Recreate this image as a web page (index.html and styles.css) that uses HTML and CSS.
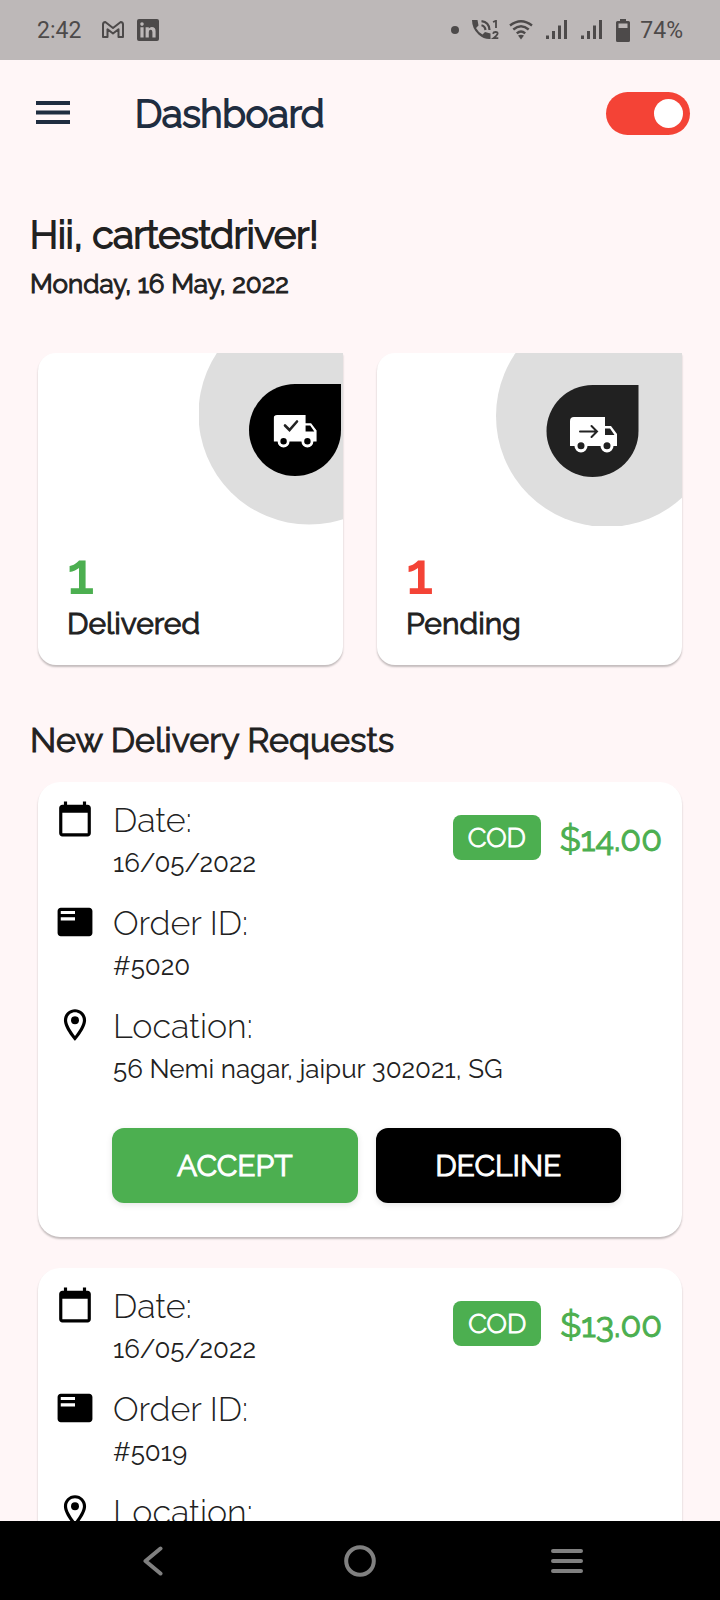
FILE: index.html
```html
<!DOCTYPE html>
<html lang="en">
<head>
<meta charset="utf-8">
<meta name="viewport" content="width=device-width, initial-scale=1">
<title>Dashboard</title>
<link rel="stylesheet" href="styles.css">
</head>
<body class="screen">
<svg class="defs" aria-hidden="true">
  <symbol id="calendar" viewBox="0 0 24 24"><path d="M20 3h-1V1h-2v2H7V1H5v2H4c-1.100 0-2 .9-2 2v16c0 1.100.9 2 2 2h16c1.100 0 2-.9 2-2V5c0-1.100-.9-2-2-2zm0 18H4V8h16v13z"/></symbol>
  <symbol id="order" viewBox="0 0 24 24"><path d="M21 3H3c-1.100 0-2 .9-2 2v14c0 1.100.9 2 2 2h18c1.100 0 2-.9 2-2V5c0-1.100-.9-2-2-2zm-9 8H3V9h9v2zm0-4H3V5h9v2z"/></symbol>
  <symbol id="pin" viewBox="0 0 24 24"><path d="M12 2C8.130 2 5 5.130 5 9c0 5.250 7 13 7 13s7-7.750 7-13c0-3.870-3.130-7-7-7zM7 9c0-2.760 2.240-5 5-5s5 2.240 5 5c0 2.880-2.880 7.190-5 9.880C9.920 16.210 7 11.850 7 9z"/><circle cx="12" cy="9" r="2.500"/></symbol>
  <symbol id="signal" viewBox="0 0 22 20"><path d="M0 15.500h3V19H0zM6 11h3v8H6zM12 5.500h3V19h-3zM18 0h3v19h-3z"/></symbol>
  <symbol id="truck" viewBox="0 0 48 36"><path fill-rule="evenodd" d="M4 0H35V9H41L47 17V29H43.500A6.500 6.500 0 0 1 30.500 29H17.500A6.500 6.500 0 0 1 4.500 29H0V4Q0 0 4 0ZM35 11.500V18H44.500L40 11.500ZM11 25.200A3.500 3.500 0 1 0 11 32.200A3.500 3.500 0 1 0 11 25.200ZM37 25.200A3.500 3.500 0 1 0 37 32.200A3.500 3.500 0 1 0 37 25.200Z"/></symbol>
</svg>

<div class="status">
  <div class="status-left">
    <span>2:42</span>
    <svg width="22" height="18" viewBox="0 0 22 18" fill="none" stroke="#4d4a4a" stroke-width="2" stroke-linejoin="round"><path d="M1 3.500Q1 1 3.300 1L11 7 18.700 1Q21 1 21 3.500V16H16.500V8.300L11 12.500 5.500 8.300V16H1Z"/></svg>
    <svg width="22" height="22" viewBox="0 0 22 22"><path fill="#4d4a4a" fill-rule="evenodd" d="M2 0H20Q22 0 22 2V20Q22 22 20 22H2Q0 22 0 20V2Q0 0 2 0ZM3.400 8.300V18.500H6.600V8.300ZM5 3.300A1.800 1.800 0 1 0 5 6.900A1.800 1.800 0 1 0 5 3.300ZM8.600 8.300V18.500H11.800V13Q11.900 10.800 13.600 10.800T15.400 13V18.500H18.600V12.200Q18.500 8.100 14.800 8.100Q12.800 8.100 11.800 9.600V8.300Z"/></svg>
  </div>
  <div class="status-right">
    <svg width="8" height="8" viewBox="0 0 8 8"><circle cx="4" cy="4" r="4"/></svg>
    <svg class="call" width="27" height="20" viewBox="0 0 27 20"><path d="M0 0H5.500L6.500 5.500 4 8Q6.500 12.500 10.500 14.500L13 12 18.500 13.500V19Q12 19.500 6.500 14.500Q0 8.500 0 0Z"/><path d="M9.500 1.200Q17 2 17.500 10M9.500 5.200Q13 6 13.500 10" fill="none" stroke="#4d4a4a" stroke-width="2.200"/><path d="M21 2L24 .8V8M21 13.700Q21.500 12 23.500 12Q26 12 25.500 14Q25 15.500 21.500 18.200H26.300" fill="none" stroke="#4d4a4a" stroke-width="1.800"/></svg>
    <svg width="24" height="20" viewBox="0 0 24 20" fill="none" stroke="#4d4a4a" stroke-width="2.400"><path d="M1 5.500Q12-3 23 5.500M4.300 9.500Q12 3 19.700 9.500M7.800 13.300Q12 9.500 16.200 13.300"/><path d="M9 15.500Q12 14 15 15.500L12 19.500Z" fill="#4d4a4a" stroke="none"/></svg>
    <svg width="22" height="20"><use href="#signal"/></svg>
    <svg width="22" height="20"><use href="#signal"/></svg>
    <svg class="battery" width="14" height="23" viewBox="0 0 14 23"><path fill-rule="evenodd" d="M4 0H10V2H12.500Q14 2 14 3.500V21.500Q14 23 12.500 23H1.500Q0 23 0 21.500V3.500Q0 2 1.500 2H4ZM2.500 4.500V9H11.500V4.500Z"/></svg>
    <span>74%</span>
  </div>
</div>

<header class="appbar">
  <button class="menu" type="button" aria-label="Menu"><svg width="34" height="24" viewBox="0 0 34 24" fill="#1f2d40"><path d="M0 0h34v4H0zM0 9.500h34v4H0zM0 19h34v4H0z"/></svg></button>
  <h1 class="title heavy">Dashboard</h1>
  <input class="toggle" type="checkbox" checked aria-label="Online">
</header>

<main class="content">
  <h2 class="greeting heavy">Hii, cartestdriver!</h2>
  <p class="today strong">Monday, 16 May, 2022</p>

  <section class="stats">
    <article class="stat">
      <svg class="art" width="144" height="173" viewBox="0 0 144 173"><circle cx="110" cy="61" r="110.500" fill="#dedede"/><path d="M96 31H142V77A46 46 0 1 1 96 31Z" fill="#000"/><svg x="74.500" y="62" width="44" height="33" fill="#fff"><use href="#truck"/></svg><path d="M86 72.500L90.500 77 98 68.500" fill="none" stroke="#222" stroke-width="2.600" stroke-linecap="round"/></svg>
      <strong class="count green">1</strong>
      <span class="caption strong">Delivered</span>
    </article>
    <article class="stat">
      <svg class="art" width="186" height="173" viewBox="0 0 186 173"><circle cx="111" cy="63" r="111" fill="#dedede"/><path d="M96.500 32H142.500V78A46 46 0 1 1 96.500 32Z" fill="#212121"/><svg x="74" y="64" width="48" height="36" fill="#fff"><use href="#truck"/></svg><path d="M84 78.500H101M95.500 73L101 78.500 95.500 84" fill="none" stroke="#222" stroke-width="2" stroke-linecap="round"/></svg>
      <strong class="count red">1</strong>
      <span class="caption strong">Pending</span>
    </article>
  </section>

  <h2 class="section-title strong">New Delivery Requests</h2>

  <section class="requests">
    <article class="request">
      <div class="info">
        <dl class="rows">
          <div class="row"><svg class="icon"><use href="#calendar"/></svg><div><dt>Date:</dt><dd>16/05/2022</dd></div></div>
          <div class="row"><svg class="icon"><use href="#order"/></svg><div><dt>Order ID:</dt><dd>#5020</dd></div></div>
          <div class="row"><svg class="icon"><use href="#pin"/></svg><div><dt>Location:</dt><dd>56 Nemi nagar, jaipur 302021, SG</dd></div></div>
        </dl>
        <div class="payment"><span class="badge">COD</span><strong class="price strong">$14.00</strong></div>
      </div>
      <div class="actions">
        <button class="action accept strong" type="button">ACCEPT</button>
        <button class="action decline strong" type="button">DECLINE</button>
      </div>
    </article>
    <article class="request">
      <div class="info">
        <dl class="rows">
          <div class="row"><svg class="icon"><use href="#calendar"/></svg><div><dt>Date:</dt><dd>16/05/2022</dd></div></div>
          <div class="row"><svg class="icon"><use href="#order"/></svg><div><dt>Order ID:</dt><dd>#5019</dd></div></div>
          <div class="row"><svg class="icon"><use href="#pin"/></svg><div><dt>Location:</dt></div></div>
        </dl>
        <div class="payment"><span class="badge">COD</span><strong class="price strong">$13.00</strong></div>
      </div>
    </article>
  </section>
</main>

<nav class="navbar">
  <button type="button" aria-label="Back"><svg width="20" height="30" viewBox="0 0 20 30"><path d="M17.500 2.500L2.500 15 17.500 27.500"/></svg></button>
  <button type="button" aria-label="Home"><svg width="32" height="32" viewBox="0 0 32 32"><circle cx="16" cy="16" r="13.800"/></svg></button>
  <button type="button" aria-label="Recent apps"><svg width="34" height="28" viewBox="0 0 34 28"><path d="M3 4H31M3 14H31M3 24H31"/></svg></button>
</nav>
</body>
</html>
```
FILE: styles.css
```css
* { box-sizing: border-box; }

.screen {
  margin: 0;
  height: 100vh;
  display: flex;
  flex-direction: column;
  overflow: hidden;
  background: #fff6f7;
  color: #212121;
  font-family: Raleway, Lato, sans-serif;
}

.defs { display: none; }

svg { display: block; flex: none; }

h1, h2, p, dl, dt, dd { margin: 0; }

button { border: 0; padding: 0; background: none; font-family: inherit; cursor: pointer; }

.strong { font-weight: 400; -webkit-text-stroke: 1px currentColor; }
.heavy { font-weight: 300; -webkit-text-stroke: 2px currentColor; }

.status {
  flex: none;
  height: 60px;
  padding: 0 37px;
  display: flex;
  align-items: center;
  justify-content: space-between;
  background: #bdb8b8;
  color: #4d4a4a;
  fill: #4d4a4a;
  font: 400 23px/24px Roboto, sans-serif;
}

.status span { padding-top: 2px; }
.status-left { display: flex; align-items: center; gap: 13px; }
.status-left span { margin-right: 8px; }
.status-right { display: flex; align-items: center; gap: 13px; }
.status-right .call { margin-right: -3px; }
.status-right .battery { margin-right: -3px; }

.appbar {
  flex: none;
  height: 106px;
  padding: 0 30px 0 36px;
  display: flex;
  align-items: center;
}

.title {
  flex: 1;
  padding: 2px 0 0 65px;
  color: #1f2d40;
  font-size: 38px;
  line-height: 50px;
}

.toggle {
  appearance: none;
  margin: 0;
  width: 84px;
  height: 43px;
  padding: 7px;
  display: flex;
  justify-content: flex-end;
  border-radius: 22px;
  background: #f44336;
}

.toggle::before {
  content: "";
  width: 29px;
  height: 29px;
  border-radius: 50%;
  background: #fff;
}

.content {
  flex: 1;
  min-height: 0;
  overflow: hidden;
  padding: 45px 30px 0;
}

.greeting { font-size: 38px; line-height: 48px; }
.today { margin-top: 5px; font-size: 26px; line-height: 40px; }

.stats {
  margin: 49px 8px 0;
  display: grid;
  grid-template-columns: 1fr 1fr;
  gap: 34px;
}

.stat {
  padding-bottom: 23px;
  display: flex;
  flex-direction: column;
  border-radius: 18px 0 18px 18px;
  background: #fff;
  box-shadow: 0 2px 2px #0000003d;
}

.art { align-self: flex-end; margin-bottom: 18px; }
.count { padding-left: 29px; font-size: 58px; font-weight: 600; line-height: 60px; margin-bottom: 2px; }
.caption { padding-left: 29px; font-size: 30px; line-height: 36px; }
.green { color: #4caf50; }
.red { color: #f44336; }

.section-title { margin-top: 53px; font-size: 34px; line-height: 44px; }

.requests {
  margin: 20px 8px 0;
  display: flex;
  flex-direction: column;
  gap: 31px;
}

.request {
  padding: 17px 20px 34px 18px;
  border-radius: 22px;
  background: #fff;
  box-shadow: 0 2px 2px #0000003d;
}

.info { display: grid; }
.rows, .payment { grid-area: 1 / 1; }
.rows { display: grid; gap: 17px; }
.row { display: flex; gap: 19px; }
.icon { width: 38px; height: 38px; margin-top: 1px; fill: #000; }
.row dt { font-size: 34px; font-weight: 300; line-height: 42px; }
.row dd { font-size: 26px; font-weight: 400; line-height: 44px; }

.payment {
  justify-self: end;
  align-self: start;
  padding-top: 16px;
  display: flex;
  align-items: center;
  gap: 19px;
}

.badge {
  padding: 0 15px;
  border-radius: 8px;
  background: #4caf50;
  color: #fff;
  font-size: 27px;
  font-weight: 300;
  -webkit-text-stroke: 1px currentColor;
  line-height: 45px;
}

.price { padding-top: 2px; color: #4caf50; font-size: 34px; }

.actions {
  margin: 37px 41px 0 56px;
  display: grid;
  grid-template-columns: 1fr 1fr;
  gap: 18px;
}

.action {
  height: 75px;
  border-radius: 12px;
  color: #fff;
  font-size: 30px;
  box-shadow: 0 2px 6px #0000001a;
}

.accept { background: #4caf50; }
.decline { background: #000; }

.navbar {
  flex: none;
  height: 79px;
  padding: 0 49px;
  display: grid;
  grid-template-columns: 1fr 1fr 1fr;
  background: #000;
}

.navbar button { display: grid; place-items: center; }
.navbar svg { fill: none; stroke: #808080; stroke-width: 4; stroke-linecap: round; stroke-linejoin: round; }
```
